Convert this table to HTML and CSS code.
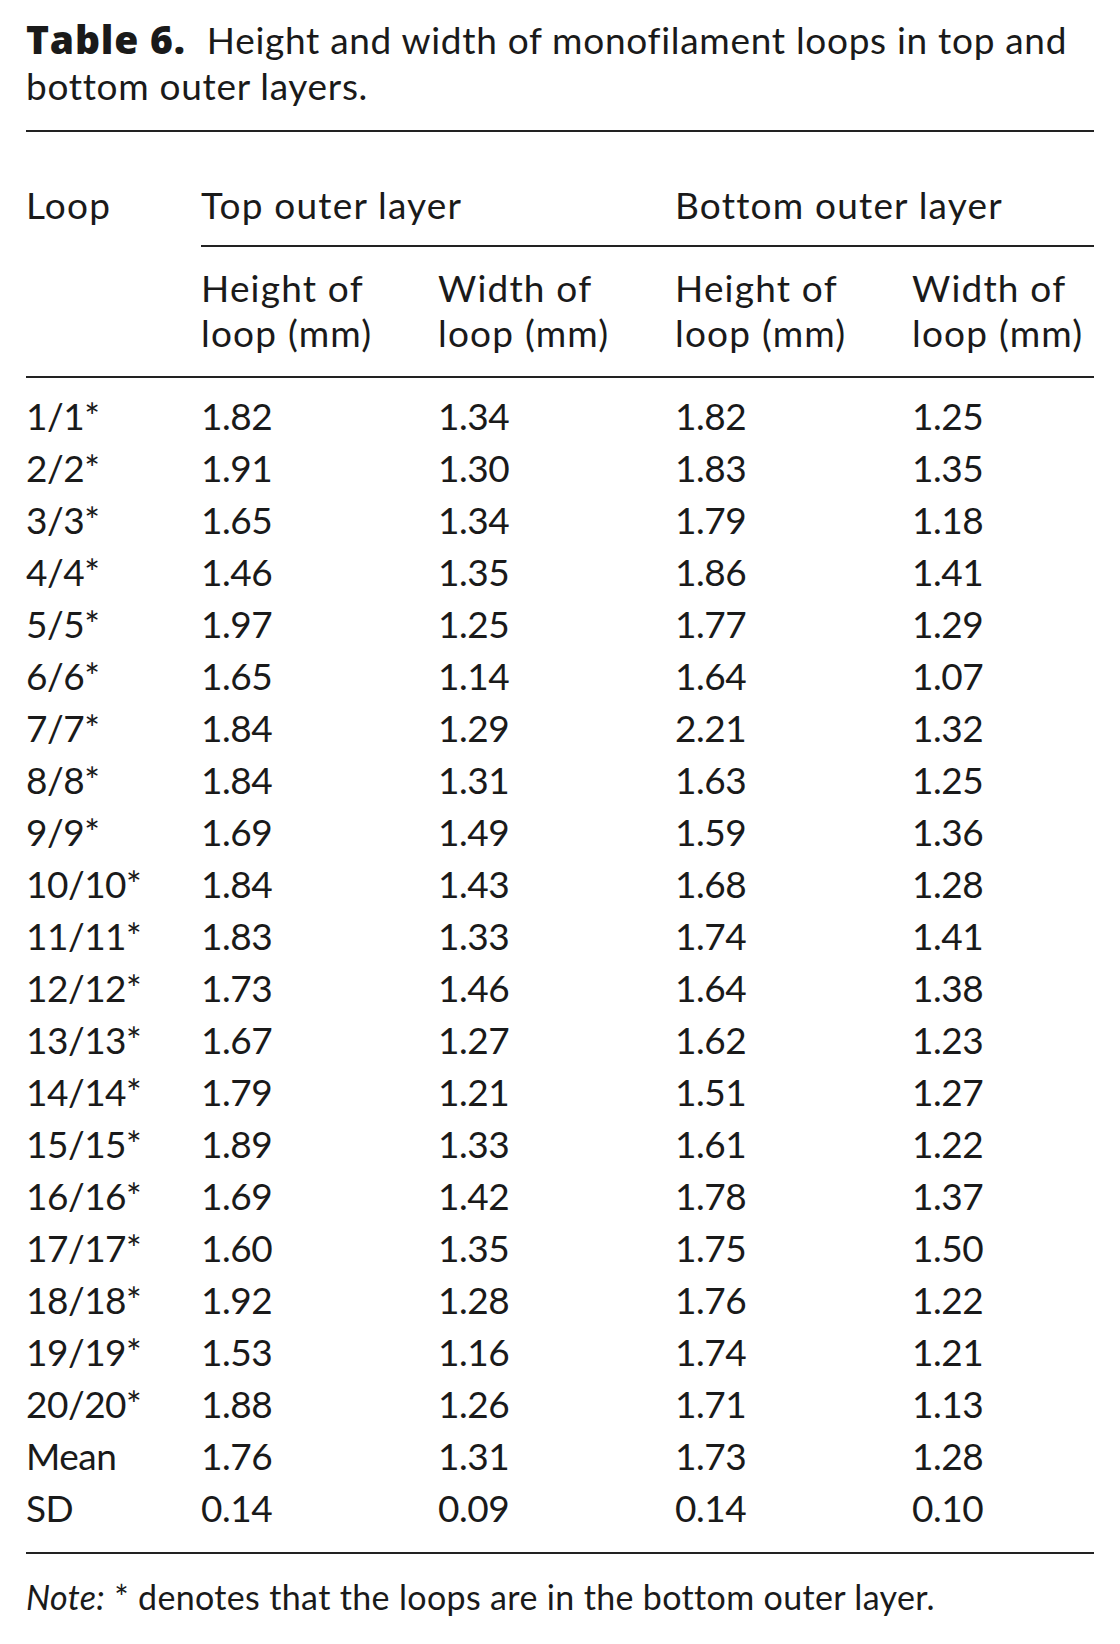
FILE: index.html
```html
<!DOCTYPE html>
<html lang="en">
<head>
<meta charset="utf-8">
<title>Table 6</title>
<link rel="stylesheet" href="styles.css">
</head>
<body>
<div class="page">
  <p class="caption"><span class="caption-label">Table 6.</span>Height and width of monofilament loops in top and bottom outer layers.</p>
  <table class="loops">
    <colgroup>
      <col class="c-stub">
      <col class="c-num">
      <col class="c-num">
      <col class="c-num">
      <col class="c-last">
    </colgroup>
    <thead>
      <tr class="head1">
        <th class="stub" rowspan="2">Loop</th>
        <th class="spanner spanner-top" colspan="2"><div class="spanner-label">Top outer layer</div></th>
        <th class="spanner spanner-bottom" colspan="2"><div class="spanner-label">Bottom outer layer</div></th>
      </tr>
      <tr class="head2">
        <th>Height of<br>loop (mm)</th>
        <th>Width of<br>loop (mm)</th>
        <th>Height of<br>loop (mm)</th>
        <th>Width of<br>loop (mm)</th>
      </tr>
    </thead>
    <tbody>
      <tr><td>1/1*</td><td>1.82</td><td>1.34</td><td>1.82</td><td>1.25</td></tr>
      <tr><td>2/2*</td><td>1.91</td><td>1.30</td><td>1.83</td><td>1.35</td></tr>
      <tr><td>3/3*</td><td>1.65</td><td>1.34</td><td>1.79</td><td>1.18</td></tr>
      <tr><td>4/4*</td><td>1.46</td><td>1.35</td><td>1.86</td><td>1.41</td></tr>
      <tr><td>5/5*</td><td>1.97</td><td>1.25</td><td>1.77</td><td>1.29</td></tr>
      <tr><td>6/6*</td><td>1.65</td><td>1.14</td><td>1.64</td><td>1.07</td></tr>
      <tr><td>7/7*</td><td>1.84</td><td>1.29</td><td>2.21</td><td>1.32</td></tr>
      <tr><td>8/8*</td><td>1.84</td><td>1.31</td><td>1.63</td><td>1.25</td></tr>
      <tr><td>9/9*</td><td>1.69</td><td>1.49</td><td>1.59</td><td>1.36</td></tr>
      <tr><td>10/10*</td><td>1.84</td><td>1.43</td><td>1.68</td><td>1.28</td></tr>
      <tr><td>11/11*</td><td>1.83</td><td>1.33</td><td>1.74</td><td>1.41</td></tr>
      <tr><td>12/12*</td><td>1.73</td><td>1.46</td><td>1.64</td><td>1.38</td></tr>
      <tr><td>13/13*</td><td>1.67</td><td>1.27</td><td>1.62</td><td>1.23</td></tr>
      <tr><td>14/14*</td><td>1.79</td><td>1.21</td><td>1.51</td><td>1.27</td></tr>
      <tr><td>15/15*</td><td>1.89</td><td>1.33</td><td>1.61</td><td>1.22</td></tr>
      <tr><td>16/16*</td><td>1.69</td><td>1.42</td><td>1.78</td><td>1.37</td></tr>
      <tr><td>17/17*</td><td>1.60</td><td>1.35</td><td>1.75</td><td>1.50</td></tr>
      <tr><td>18/18*</td><td>1.92</td><td>1.28</td><td>1.76</td><td>1.22</td></tr>
      <tr><td>19/19*</td><td>1.53</td><td>1.16</td><td>1.74</td><td>1.21</td></tr>
      <tr><td>20/20*</td><td>1.88</td><td>1.26</td><td>1.71</td><td>1.13</td></tr>
      <tr><td>Mean</td><td>1.76</td><td>1.31</td><td>1.73</td><td>1.28</td></tr>
      <tr><td>SD</td><td>0.14</td><td>0.09</td><td>0.14</td><td>0.10</td></tr>
    </tbody>
  </table>
  <p class="note"><em>Note:</em> * denotes that the loops are in the bottom outer layer.</p>
</div>
</body>
</html>
```

FILE: styles.css
```css
html, body {
  margin: 0;
  padding: 0;
  background: #ffffff;
}

body {
  font-family: Lato, "Open Sans", "DejaVu Sans", sans-serif;
  color: #1a1a1a;
}

.page {
  width: 1068px;
  padding: 0 26px;
}

.caption {
  margin: 0;
  padding-top: 17px;
  font-size: 37px;
  line-height: 46px;
  letter-spacing: 0.7px;
}

.caption-label {
  font-family: "Open Sans", Lato, sans-serif;
  font-size: 39px;
  line-height: 1;
  font-weight: 800;
  letter-spacing: 0.8px;
  margin-right: 21px;
}

.loops {
  width: 1068px;
  border-collapse: collapse;
  table-layout: fixed;
  margin-top: 21px;
  border-top: 2px solid #222;
  border-bottom: 2px solid #222;
  font-size: 37px;
}

.c-stub { width: 175px; }
.c-num { width: 237px; }
.c-last { width: 182px; }

.loops th,
.loops td {
  padding: 0;
  text-align: left;
  font-weight: 400;
  vertical-align: top;
  white-space: nowrap;
}

.loops th {
  letter-spacing: 1.2px;
}

.loops td {
  letter-spacing: -0.5px;
  line-height: 52px;
}

.loops thead {
  border-bottom: 2px solid #222;
}

.head1 th {
  padding-top: 48px;
  line-height: 50px;
}

.spanner-label {
  padding-bottom: 15px;
  border-bottom: 2px solid #222;
}

.spanner-top {
  padding-right: 78px;
}

.spanner-bottom {
  padding-right: 19px;
}

.head2 th {
  padding-top: 18px;
  padding-bottom: 21px;
  line-height: 45px;
}

.loops tbody tr:first-child td {
  padding-top: 12px;
}

.loops tbody tr:last-child td {
  padding-bottom: 18px;
}

.note {
  margin: 18px 0 0;
  font-size: 34px;
  line-height: 50px;
  letter-spacing: 0.35px;
}

.note em {
  font-style: italic;
}
```
